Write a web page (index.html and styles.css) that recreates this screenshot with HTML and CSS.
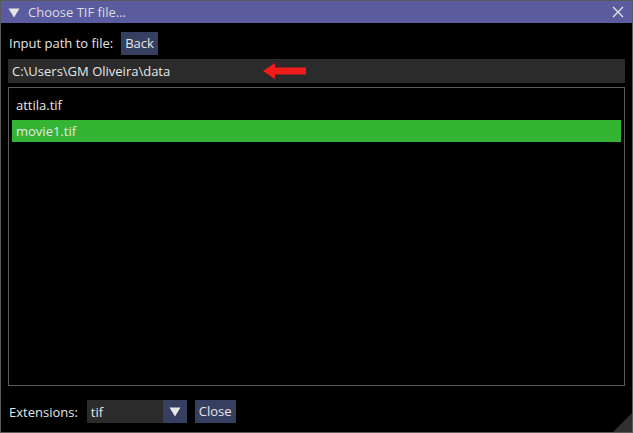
FILE: index.html
```html
<!DOCTYPE html>
<html>
<head>
<meta charset="utf-8">
<link rel="stylesheet" href="styles.css">
</head>
<body>
<div class="window">
  <div class="titlebar">
    <svg class="collapse" width="12" height="10" viewBox="0 0 12 10"><polygon points="0.5,0.5 11.5,0.5 6,9.5" fill="#e6e6e6"/></svg>
    <span class="title">Choose TIF file...</span>
    <svg class="close" width="12" height="12" viewBox="0 0 12 12"><path d="M1 1 L11 11 M11 1 L1 11" stroke="#e6e6e6" stroke-width="1.3"/></svg>
  </div>
  <div class="content">
    <div class="row top-row">
      <span class="label">Input path to file:</span>
      <span class="btn back">Back</span>
    </div>
    <div class="field path">
      <span class="path-text">C:\Users\GM Oliveira\data</span>
      <svg class="arrow" width="44" height="16" viewBox="0 0 44 16"><polygon points="0,8 12,0 12,4.5 43,4.5 43,11.5 12,11.5 12,16" fill="#f21b1b"/></svg>
    </div>
    <div class="list">
      <div class="item">attila.tif</div>
      <div class="item selected">movie1.tif</div>
    </div>
    <div class="row bottom-row">
      <span class="label">Extensions:</span>
      <div class="combo">
        <span class="combo-text">tif</span>
        <span class="combo-arrow"><svg width="12" height="10" viewBox="0 0 12 10"><polygon points="0.5,0.5 11.5,0.5 6,9.5" fill="#e6e6e6"/></svg></span>
      </div>
      <span class="btn closebtn">Close</span>
    </div>
  </div>
  <div class="grip"></div>
</div>
</body>
</html>
```
FILE: styles.css
```css
html, body {
  margin: 0;
  padding: 0;
  background: #000;
}
body {
  font-family: "Open Sans", "DejaVu Sans", sans-serif;
  font-size: 13px;
  color: #e6e6e6;
}
.window {
  position: relative;
  width: 633px;
  height: 433px;
  box-sizing: border-box;
  border: 1px solid #5a5a5a;
  background: #000;
  display: flex;
  flex-direction: column;
  overflow: hidden;
}
.titlebar {
  height: 22px;
  background: #5b5c9f;
  display: flex;
  align-items: center;
  padding: 0 7px;
  flex: none;
}
.collapse {
  margin-right: 8px;
  margin-top: 1px;
}
.title {
  flex: 1;
  color: #dcdcdc;
  line-height: 22px;
}
.close {
  margin-right: 1px;
  margin-top: -1px;
}
.content {
  flex: 1;
  display: flex;
  flex-direction: column;
  padding: 8px 7px 9px 7px;
}
.row {
  display: flex;
  align-items: center;
}
.top-row {
  height: 24px;
}
.label {
  margin-left: 1px;
}
.btn {
  background: #373f60;
  height: 23px;
  line-height: 23px;
  padding: 0 4px;
}
.back {
  margin-left: 8px;
}
.field {
  margin-top: 4px;
  height: 24px;
  background: #2b2b2b;
  display: flex;
  align-items: center;
  padding-left: 4px;
  line-height: 26px;
}
.path-text {
  width: 165px;
  white-space: nowrap;
}
.arrow {
  margin-left: 86px;
}
.list {
  margin-top: 4px;
  height: 299px;
  box-sizing: border-box;
  border: 1px solid #5a5a5a;
  padding: 6px 3px;
}
.item {
  height: 22px;
  line-height: 22px;
  padding-left: 4px;
  margin-bottom: 4px;
}
.selected {
  background: #33b433;
}
.bottom-row {
  margin-top: auto;
  height: 23px;
}
.combo {
  margin-left: 9px;
  display: flex;
  height: 23px;
  width: 100px;
}
.combo-text {
  flex: 1;
  background: #2b2b2b;
  padding-left: 4px;
  line-height: 25px;
}
.combo-arrow {
  width: 24px;
  background: #373f60;
  display: flex;
  align-items: center;
  justify-content: center;
}
.closebtn {
  margin-left: 8px;
}
.grip {
  position: absolute;
  right: 0;
  bottom: 0;
  width: 0;
  height: 0;
  border-left: 19px solid transparent;
  border-bottom: 19px solid #303030;
}
```
